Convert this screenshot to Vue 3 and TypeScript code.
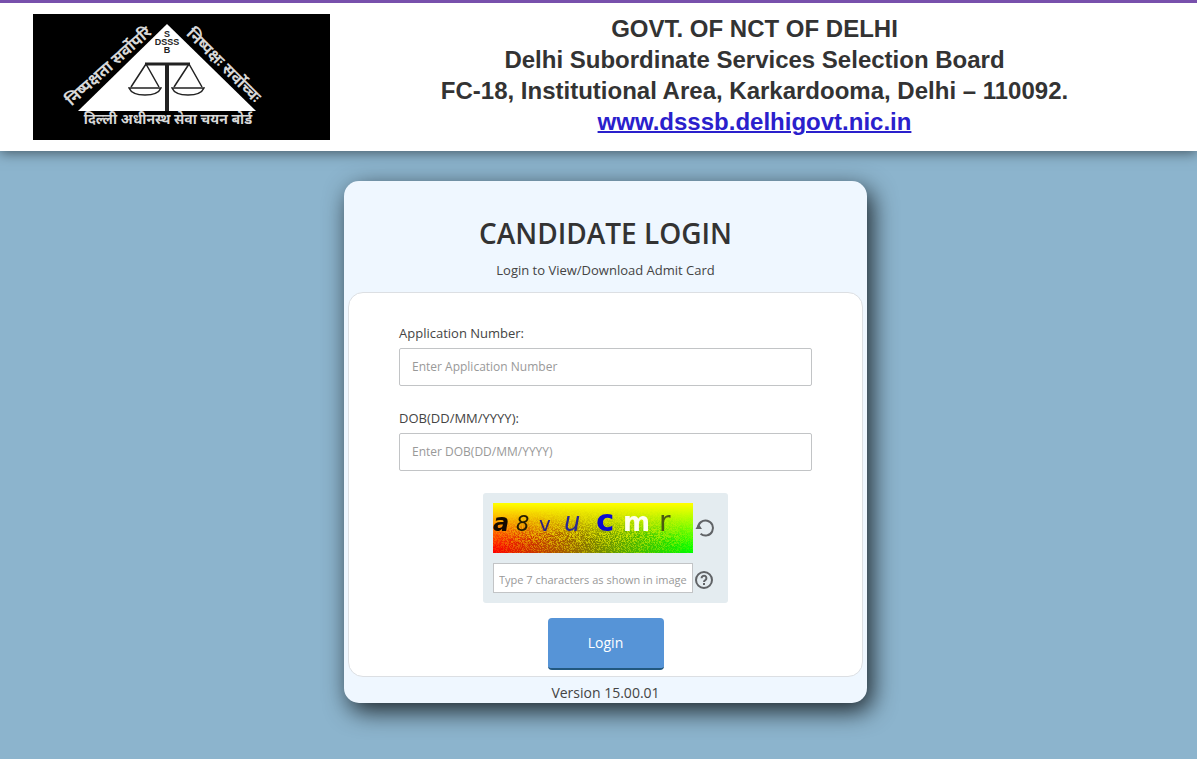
<script setup lang="ts">
import { onMounted, ref } from 'vue'

const applicationNumber = ref('')
const dob = ref('')
const captcha = ref('')
const canvas = ref<HTMLCanvasElement | null>(null)
const seed = ref(7)

interface Glyph { ch: string; x: number; y: number; size: number; fill: string; bold?: boolean; italic?: boolean }
const glyphs: Glyph[] = [
  { ch: 'a', x: 0, y: 28, size: 24, fill: '#140a00', bold: true, italic: true },
  { ch: '8', x: 23, y: 28, size: 21, fill: '#241c00', italic: true },
  { ch: 'v', x: 46, y: 28, size: 20, fill: '#2a2080' },
  { ch: 'u', x: 71, y: 28, size: 26, fill: '#2a2890', italic: true },
  { ch: 'c', x: 103, y: 28, size: 31, fill: '#0a0ad0', bold: true },
  { ch: 'm', x: 130, y: 28, size: 26, fill: '#fffff0', bold: true },
  { ch: 'r', x: 166, y: 28, size: 28, fill: '#4a5a10' },
]

// Yellow fades into a red-to-green base, with grain that grows towards the bottom.
function paint() {
  const el = canvas.value
  const ctx = el?.getContext('2d')
  if (!el || !ctx) return
  const { width, height } = el
  const img = ctx.createImageData(width, height)
  let s = seed.value
  const rand = () => {
    s = (s * 1664525 + 1013904223) >>> 0
    return s / 4294967296
  }
  for (let y = 0; y < height; y++) {
    for (let x = 0; x < width; x++) {
      const u = x / (width - 1)
      const v = y / (height - 1)
      const grain = (rand() - 0.5) * 0.95 * Math.min(1, v * v * 2.2) * (0.2 + 3 * u * (1 - u))
      const t = Math.max(0, Math.min(1, v + grain))
      const i = (y * width + x) * 4
      img.data[i] = 255 * (1 - t * u)
      img.data[i + 1] = 255 * (1 - t * (1 - u))
      img.data[i + 2] = 0
      img.data[i + 3] = 255
    }
  }
  ctx.putImageData(img, 0, 0)
}

function refresh() {
  seed.value += 1
  paint()
}

onMounted(paint)
</script>

<template>
  <div class="page">
    <header class="banner">
      <svg class="emblem" viewBox="0 0 297 126" role="img" aria-label="DSSSB emblem">
        <rect width="297" height="126" fill="#000" />
        <path d="M134 10 L223 97 H45 Z" fill="#fff" />
        <g class="dev" fill="#d8d8d8" text-anchor="middle">
          <text transform="translate(79 56) rotate(-42)" font-size="16">निष्पक्षता सर्वोपरि</text>
          <text transform="translate(187 55) rotate(45)" font-size="16">निष्पक्षः सर्वोच्चः</text>
          <text x="135" y="110" font-size="14">दिल्ली अधीनस्थ सेवा चयन बोर्ड</text>
        </g>
        <g class="abbr" fill="#222" text-anchor="middle">
          <text x="134" y="23" font-size="9">S</text>
          <text x="134" y="31" font-size="9">DSSS</text>
          <text x="134" y="39" font-size="9">B</text>
        </g>
        <g fill="none" stroke="#222">
          <path d="M112 50 H157" stroke-width="3" />
          <path d="M134 50 V97" stroke-width="4" />
          <path d="M113 50 L98 73 M113 50 L126 73 M156 50 L141 73 M156 50 L169 73" stroke-width="1.5" />
          <path d="M96 74 H128 Q125 81 112 81 Q99 81 96 74 Z M139 74 H171 Q168 81 155 81 Q142 81 139 74 Z" stroke-width="1.5" />
        </g>
      </svg>
      <div class="titles">
        <div>GOVT. OF NCT OF DELHI</div>
        <div>Delhi Subordinate Services Selection Board</div>
        <div>FC-18, Institutional Area, Karkardooma, Delhi – 110092.</div>
        <a href="#">www.dsssb.delhigovt.nic.in</a>
      </div>
    </header>

    <main class="main">
      <section class="card">
        <h1>CANDIDATE LOGIN</h1>
        <p class="sub">Login to View/Download Admit Card</p>
        <form class="panel" @submit.prevent>
          <div class="field">
            <label for="app-no">Application Number:</label>
            <input id="app-no" v-model="applicationNumber" type="text" placeholder="Enter Application Number" />
          </div>
          <div class="field">
            <label for="dob">DOB(DD/MM/YYYY):</label>
            <input id="dob" v-model="dob" type="text" placeholder="Enter DOB(DD/MM/YYYY)" />
          </div>
          <div class="captcha">
            <div class="challenge">
              <canvas ref="canvas" width="200" height="50"></canvas>
              <svg class="letters" viewBox="0 0 200 50" aria-hidden="true">
                <text
                  v-for="g in glyphs"
                  :key="g.ch"
                  :x="g.x"
                  :y="g.y"
                  :font-size="g.size"
                  :fill="g.fill"
                  :font-weight="g.bold ? 700 : 400"
                  :font-style="g.italic ? 'italic' : 'normal'"
                >{{ g.ch }}</text>
              </svg>
            </div>
            <button type="button" class="icon" aria-label="Refresh image" @click="refresh">
              <svg viewBox="0 0 20 20" width="20" height="20">
                <path d="M3 10 A7.5 7.5 0 1 1 5.6 15.7" fill="none" stroke="#606366" stroke-width="2" />
                <path d="M0.5 11 L3.6 5.8 L7 11 Z" fill="#606366" />
              </svg>
            </button>
            <input v-model="captcha" type="text" aria-label="Captcha" placeholder="Type 7 characters as shown in image" />
            <button type="button" class="icon" aria-label="Help">
              <svg viewBox="0 0 20 20" width="20" height="20">
                <circle cx="9" cy="12" r="8" fill="none" stroke="#606366" stroke-width="2" />
                <path d="M6.6 10.2 A2.4 2.4 0 1 1 10.3 12.1 Q9 12.9 9 14" fill="none" stroke="#606366" stroke-width="2" />
                <rect x="8" y="15" width="2" height="2" fill="#606366" />
              </svg>
            </button>
          </div>
          <button type="submit" class="login">Login</button>
        </form>
        <footer class="version">Version 15.00.01</footer>
      </section>
    </main>
  </div>
</template>

<style>
body {
  background: #8cb4cd;
}
</style>

<style scoped>
.page {
  min-height: 100vh;
  font-family: 'Open Sans', 'Noto Sans', sans-serif;
  color: #444;
}
.page * {
  box-sizing: border-box;
}
.banner {
  position: relative;
  display: flex;
  align-items: flex-start;
  padding: 10px 18px 11px 33px;
  background: #fff;
  border-top: 3px solid #7850ac;
  box-shadow: 0 2px 12px rgba(0, 0, 0, 0.5);
}
.emblem {
  flex: none;
  display: block;
  width: 297px;
  height: 126px;
  margin-top: 1px;
}
.dev {
  font-family: 'Noto Sans Devanagari', 'Noto Sans', sans-serif;
  font-weight: 700;
}
.abbr {
  font-family: 'Liberation Sans', Arial, sans-serif;
  font-weight: 700;
}
.titles {
  flex: 1;
  text-align: center;
  font: 700 24px/31px 'Liberation Sans', Arial, sans-serif;
  color: #333;
}
.titles a {
  display: block;
  color: #2a20cc;
  text-decoration-thickness: 2px;
}
.main {
  display: flex;
  justify-content: center;
  padding: 30px 0 56px 14px;
}
.card {
  width: 523px;
  max-width: 100%;
  padding: 32px 4px 0;
  background: #eff7ff;
  border-radius: 15px;
  box-shadow: 5px 8px 25px rgba(0, 0, 0, 0.8);
  text-align: center;
}
h1 {
  margin: 0;
  font-size: 28px;
  line-height: 40px;
  font-weight: 600;
  color: #333;
}
.sub {
  margin: 8px 0 12px;
  font-size: 13px;
  line-height: 19px;
}
.panel {
  display: flex;
  flex-direction: column;
  align-items: center;
  padding: 30px 50px 6px;
  background: #fff;
  border: 1px solid #dcdfe3;
  border-radius: 15px;
}
.field {
  width: 100%;
  margin-bottom: 22px;
  text-align: left;
}
.field label {
  display: block;
  margin-bottom: 5px;
  font-size: 13px;
  line-height: 20px;
}
input {
  font-family: inherit;
  color: #555;
  background: #fff;
  border: 1px solid #c2c4c6;
  outline: none;
}
input::placeholder {
  color: #999;
  opacity: 1;
}
.field input {
  display: block;
  width: 100%;
  height: 38px;
  padding: 0 12px 2px;
  border-radius: 2px;
  font-size: 12px;
}
.captcha {
  display: grid;
  grid-template-columns: 200px 20px;
  align-items: center;
  column-gap: 2px;
  row-gap: 10px;
  width: 245px;
  padding: 10px;
  background: #e4ecf0;
  border-radius: 3px;
}
.challenge {
  position: relative;
  height: 50px;
}
.challenge canvas {
  display: block;
}
.letters {
  position: absolute;
  inset: 0;
  font-family: 'DejaVu Sans', sans-serif;
}
.captcha input {
  width: 200px;
  height: 30px;
  padding: 3px 5px 0;
  font-size: 11px;
}
.icon {
  display: block;
  width: 20px;
  height: 20px;
  padding: 0;
  border: 0;
  background: none;
  cursor: pointer;
}
.icon svg {
  display: block;
  overflow: visible;
}
.login {
  width: 116px;
  height: 52px;
  margin-top: 15px;
  padding: 0 0 2px;
  border: 0;
  border-bottom: 2px solid #22587f;
  border-radius: 4px;
  background: #5694d7;
  color: #fff;
  font-family: inherit;
  font-size: 14px;
  font-weight: 500;
  cursor: pointer;
}
.version {
  padding: 6px 0 0;
  font-size: 14px;
  line-height: 20px;
}
</style>
